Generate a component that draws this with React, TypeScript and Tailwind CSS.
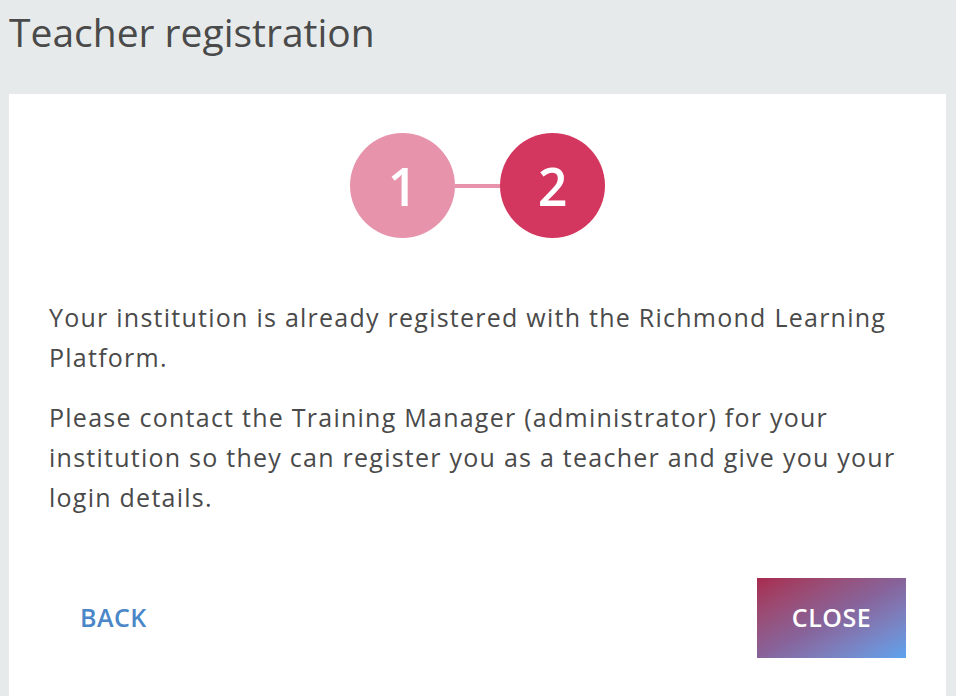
export default function App() {
  return (
    <div
      className="w-[956px] h-[696px] overflow-hidden bg-[#e7eaea] flex flex-col"
      style={{ fontFamily: "'Open Sans', sans-serif" }}
    >
      <h1 className="h-[94px] pl-[9px] pt-[6px] text-[39px] leading-[52px] text-[#4a4a4a]">
        Teacher registration
      </h1>

      <div className="flex-1 mx-[9px] mr-[10px] bg-white px-[40px] pt-[39px]">
        {/* stepper */}
        <div className="flex items-center justify-center">
          <div className="w-[105px] h-[105px] rounded-full bg-[#e693ab] flex items-center justify-center text-white text-[52px] font-semibold leading-none">
            1
          </div>
          <div className="w-[45px] h-[4px] bg-[#e693ab]" />
          <div className="w-[105px] h-[105px] rounded-full bg-[#d3365f] flex items-center justify-center text-white text-[52px] font-semibold leading-none">
            2
          </div>
        </div>

        <div className="mt-[59px] w-[855px] text-[25px] leading-[40px] tracking-[0.05em] text-[#4a4a4a]">
          <p>Your institution is already registered with the Richmond Learning Platform.</p>
          <p className="mt-[20px]">
            Please contact the Training Manager (administrator) for your institution so they can register you as a
            teacher and give you your login details.
          </p>
        </div>

        <div className="mt-[61px] flex items-center justify-between">
          <button className="ml-[31px] text-[25px] font-semibold tracking-[0.02em] text-[#4a86c8]">BACK</button>
          <button className="w-[149px] h-[80px] bg-gradient-to-br from-[#a8294f] via-[#87639a] to-[#5ba3ee] text-white text-[25px] font-semibold tracking-[0.02em]">
            CLOSE
          </button>
        </div>
      </div>
    </div>
  );
}
